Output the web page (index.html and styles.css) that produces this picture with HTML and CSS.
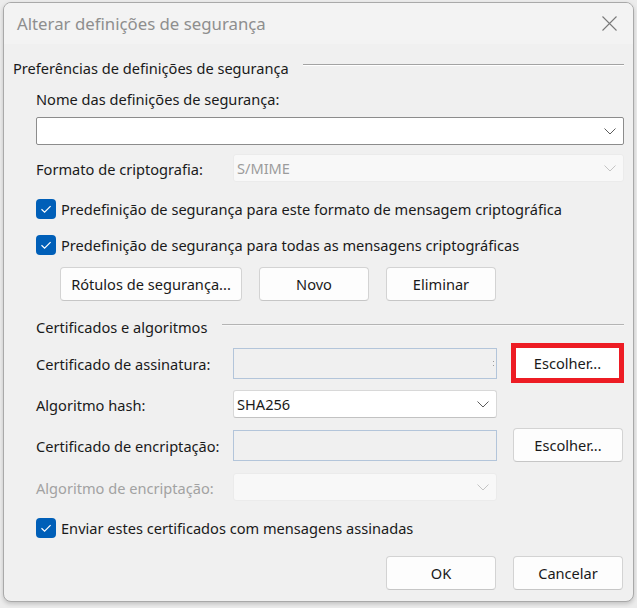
FILE: index.html
```html
<!DOCTYPE html>
<html lang="pt">
<head>
<meta charset="utf-8">
<title>Alterar definições de segurança</title>
<link rel="stylesheet" href="styles.css">
</head>
<body>
<div class="dialog">
  <div class="titlebar">
    <span class="title">Alterar definições de segurança</span>
    <svg class="close" width="15" height="15" viewBox="0 0 15 15"><path d="M0.5 0.5 L14.5 14.5 M14.5 0.5 L0.5 14.5" stroke="#7a7a7a" stroke-width="1.1" fill="none"/></svg>
  </div>
  <div class="body">
    <div class="group-head first"><span>Preferências de definições de segurança</span><div class="rule"></div></div>
    <div class="label-row">Nome das definições de segurança:</div>
    <div class="combo editable full">
      <span class="val"></span>
      <svg class="chev" width="12" height="7" viewBox="0 0 12 7"><path d="M0.5 0.5 L6 6 L11.5 0.5" stroke="#5c5c5c" stroke-width="1" fill="none"/></svg>
    </div>
    <div class="row r-format">
      <span class="lbl">Formato de criptografia:</span>
      <div class="combo disabled wide">
        <span class="val">S/MIME</span>
        <svg class="chev" width="12" height="7" viewBox="0 0 12 7"><path d="M0.5 0.5 L6 6 L11.5 0.5" stroke="#c4c4c4" stroke-width="1" fill="none"/></svg>
      </div>
    </div>
    <div class="check c1">
      <span class="box"><svg width="20" height="20" viewBox="0 0 20 20"><path d="M5.5 10.2 L8.6 13.2 L14.6 7.2" stroke="#fff" stroke-width="1.2" fill="none"/></svg></span>
      <span>Predefinição de segurança para este formato de mensagem criptográfica</span>
    </div>
    <div class="check c2">
      <span class="box"><svg width="20" height="20" viewBox="0 0 20 20"><path d="M5.5 10.2 L8.6 13.2 L14.6 7.2" stroke="#fff" stroke-width="1.2" fill="none"/></svg></span>
      <span>Predefinição de segurança para todas as mensagens criptográficas</span>
    </div>
    <div class="btn-row">
      <button class="btn btn-labels">Rótulos de segurança...</button>
      <button class="btn">Novo</button>
      <button class="btn">Eliminar</button>
    </div>
    <div class="group-head second"><span>Certificados e algoritmos</span><div class="rule"></div></div>
    <div class="row r-sign">
      <span class="lbl">Certificado de assinatura:</span>
      <div class="field"><span class="clip-mark"></span></div>
      <div class="highlight">Escolher...</div>
    </div>
    <div class="row r-hash">
      <span class="lbl">Algoritmo hash:</span>
      <div class="combo normal">
        <span class="val">SHA256</span>
        <svg class="chev" width="12" height="7" viewBox="0 0 12 7"><path d="M0.5 0.5 L6 6 L11.5 0.5" stroke="#5c5c5c" stroke-width="1" fill="none"/></svg>
      </div>
    </div>
    <div class="row r-enc">
      <span class="lbl">Certificado de encriptação:</span>
      <div class="field"></div>
      <button class="btn btn-choose">Escolher...</button>
    </div>
    <div class="row r-encalg">
      <span class="lbl dim">Algoritmo de encriptação:</span>
      <div class="combo disabled">
        <span class="val"></span>
        <svg class="chev" width="12" height="7" viewBox="0 0 12 7"><path d="M0.5 0.5 L6 6 L11.5 0.5" stroke="#c4c4c4" stroke-width="1" fill="none"/></svg>
      </div>
    </div>
    <div class="check c3">
      <span class="box"><svg width="20" height="20" viewBox="0 0 20 20"><path d="M5.5 10.2 L8.6 13.2 L14.6 7.2" stroke="#fff" stroke-width="1.2" fill="none"/></svg></span>
      <span>Enviar estes certificados com mensagens assinadas</span>
    </div>
    <div class="footer">
      <button class="btn">OK</button>
      <button class="btn">Cancelar</button>
    </div>
  </div>
</div>
</body>
</html>
```

FILE: styles.css
```css
html, body {
  margin: 0;
  padding: 0;
}
body {
  background: #ececec;
  font-family: "Noto Sans", "Segoe UI", sans-serif;
  font-size: 14.6px;
  color: #1a1a1a;
  width: 637px;
  height: 608px;
  overflow: hidden;
}
.dialog {
  margin: 2px 0 0 3px;
  width: 631px;
  height: 600px;
  box-sizing: border-box;
  border: 1px solid #a9a9a9;
  border-radius: 8px;
  background: #f0f0f0;
  overflow: hidden;
  box-shadow: 0 2px 4px rgba(0, 0, 0, 0.18);
}
.titlebar {
  height: 41px;
  background: #f3f3f3;
  display: flex;
  align-items: center;
  padding: 0 16px 0 13px;
}
.title {
  flex: 1;
  font-size: 16.8px;
  color: #8e8e8e;
}
.close {
  display: block;
}
.body {
  padding: 0 9px 0 32px;
}
.group-head {
  display: flex;
  height: 18px;
  align-items: center;
  white-space: nowrap;
}
.group-head .rule {
  flex: 1;
  height: 0;
  border-top: 1px solid #a3a3a3;
  border-bottom: 1px solid #ffffff;
  align-self: flex-start;
}
.group-head.first {
  margin: 15px 0 0 -23px;
}
.group-head.first .rule {
  margin: 5px 0 0 14px;
}
.group-head.second {
  margin-top: 17px;
}
.group-head.second .rule {
  margin: 6px 0 0 15px;
  border-top-color: #b4b4b4;
  border-bottom-color: #f7f7f7;
}
.label-row {
  margin-top: 13px;
  height: 18px;
  display: flex;
  align-items: center;
}
.combo {
  box-sizing: border-box;
  height: 28px;
  display: flex;
  align-items: center;
  padding: 0 7px 0 3px;
  border-radius: 3px;
}
.combo .val {
  flex: 1;
}
.combo .chev {
  display: block;
}
.combo.full {
  margin-top: 9px;
  width: 588px;
  background: #ffffff;
  border: 1px solid #8c8c8c;
  border-radius: 2px;
}
.combo.wide {
  width: 391px;
}
.combo.disabled {
  background: #f8f8f8;
  border: 1px solid #ebebeb;
  color: #9c9c9c;
}
.combo.normal {
  background: #ffffff;
  border: 1px solid #d8d8d8;
  border-bottom-color: #c2c2c2;
}
.row {
  display: flex;
  align-items: center;
}
.row .lbl {
  width: 197px;
  flex: none;
  position: relative;
  top: 1px;
}
.lbl.dim {
  color: #a2a2a2;
}
.row .combo:not(.wide), .row .field {
  width: 264px;
  flex: none;
}
.r-format { margin-top: 9px; }
.r-sign { margin-top: 7px; height: 40px; }
.r-hash { margin-top: 7px; }
.r-enc { margin-top: 10px; height: 34px; }
.r-encalg { margin-top: 11px; }
.field {
  box-sizing: border-box;
  height: 31px;
  border: 1px solid #b3c5da;
  background: #f0f0f0;
  position: relative;
}
.clip-mark {
  position: absolute;
  right: 2px;
  top: 12px;
  width: 1px;
  height: 5px;
  border-top: 1px solid #9a9a9a;
  border-bottom: 1px solid #9a9a9a;
  box-sizing: border-box;
}
.check {
  display: flex;
  align-items: center;
  height: 20px;
  gap: 5px;
  white-space: nowrap;
}
.check .box {
  width: 20px;
  height: 20px;
  flex: none;
  background: #005fb8;
  border-radius: 4px;
  display: block;
}
.check .box svg {
  display: block;
}
.c1 { margin-top: 17px; }
.c2 { margin-top: 16px; }
.c3 { margin-top: 17px; }
.btn {
  box-sizing: border-box;
  height: 34px;
  width: 110px;
  background: #fdfdfd;
  border: 1px solid #d3d3d3;
  border-bottom-color: #c6c6c6;
  border-radius: 4px;
  font: inherit;
  color: #1a1a1a;
  padding: 0;
  display: flex;
  align-items: center;
  justify-content: center;
}
.btn-row {
  margin: 12px 0 0 24px;
  display: flex;
  gap: 17px;
}
.btn-row .btn-labels {
  width: 182px;
}
.highlight {
  box-sizing: border-box;
  margin-left: 14px;
  width: 117px;
  height: 40px;
  border: 5px solid #ed1c24;
  background: #ffffff;
  display: flex;
  align-items: center;
  justify-content: center;
}
.btn-choose {
  margin-left: 16px;
}
.footer {
  margin-top: 18px;
  display: flex;
  justify-content: flex-end;
  gap: 17px;
  padding-right: 1px;
}
```
